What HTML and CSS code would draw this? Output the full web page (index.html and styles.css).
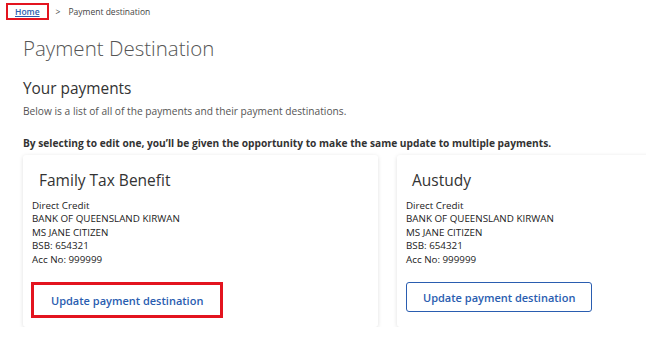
FILE: index.html
```html
<!DOCTYPE html>
<html lang="en">

<head>
	<meta charset="UTF-8" />
	<meta name="viewport" content="width=device-width, initial-scale=1.0" />
	<title>Payment Destination</title>
	<link rel="stylesheet" href="styles.css">
</head>

<body>
	<nav class="breadcrumb">
		<a href="#" class="crumb-home">Home</a>
		<span class="crumb-sep">&gt;</span>
		<span class="crumb-current">Payment destination</span>
	</nav>

	<main class="page">
		<h1 class="page-title">Payment Destination</h1>
		<h2 class="section-title">Your payments</h2>
		<p class="intro">Below is a list of all of the payments and their payment destinations.</p>
		<p class="note">By selecting to edit one, you’ll be given the opportunity to make the same update to multiple payments.</p>

		<div class="cards">
			<div class="card card-first">
				<h3 class="card-title">Family Tax Benefit</h3>
				<div class="card-details">
					<div>Direct Credit</div>
					<div>BANK OF QUEENSLAND KIRWAN</div>
					<div>MS JANE CITIZEN</div>
					<div>BSB: 654321</div>
					<div>Acc No: 999999</div>
				</div>
				<button class="update-button highlighted">Update payment destination</button>
			</div>
			<div class="card card-second">
				<h3 class="card-title">Austudy</h3>
				<div class="card-details">
					<div>Direct Credit</div>
					<div>BANK OF QUEENSLAND KIRWAN</div>
					<div>MS JANE CITIZEN</div>
					<div>BSB: 654321</div>
					<div>Acc No: 999999</div>
				</div>
				<button class="update-button">Update payment destination</button>
			</div>
		</div>
	</main>
</body>

</html>
```

FILE: styles.css
```css
body {
	margin: 0;
	background-color: #ffffff;
	font-family: "Open Sans", "Noto Sans", sans-serif;
	color: #333333;
	overflow: hidden;
}

.breadcrumb {
	display: flex;
	align-items: center;
	gap: 7px;
	padding: 3px 0 0 6px;
	font-size: 8.5px;
	color: #444444;
}

.crumb-home {
	color: #2a5db0;
	font-weight: 600;
	padding: 1px 7px;
	border: 2px solid #e3141f;
}

.crumb-sep {
	margin-right: 1px;
}

.page {
	padding: 0 0 0 23px;
}

.page-title {
	margin: 14px 0 0;
	font-size: 20.5px;
	font-weight: 300;
	color: #555555;
}

.section-title {
	margin: 16px 0 0;
	font-size: 15.4px;
	font-weight: 400;
	color: #333333;
}

.intro {
	margin: 5px 0 0;
	font-size: 10.2px;
	color: #555555;
}

.note {
	margin: 18px 0 0;
	font-size: 10.2px;
	font-weight: 700;
	color: #333333;
}

.cards {
	display: flex;
	gap: 19px;
	margin-top: 5px;
}

.card {
	background-color: #ffffff;
	border-radius: 3px;
	box-shadow: 0 1px 4px rgba(0, 0, 0, 0.13);
	height: 172px;
	box-sizing: border-box;
	padding: 10px 9px;
}

.card-first {
	width: 355px;
	flex-shrink: 0;
}

.card-second {
	flex: 1;
	margin-right: -10px;
}

.card-title {
	margin: 4px 0 0 7px;
	font-size: 15.5px;
	font-weight: 400;
	color: #333333;
}

.card-second .card-title {
	margin-left: 6px;
}

.card-details {
	margin-top: 8px;
	font-size: 9.8px;
	line-height: 13.4px;
	color: #222222;
}

.update-button {
	margin-top: 16px;
	padding: 0 16px;
	height: 30px;
	background-color: #ffffff;
	border: 1px solid #2a5db0;
	border-radius: 3px;
	color: #2a5db0;
	font-family: "Open Sans", "Noto Sans", sans-serif;
	font-size: 11px;
	font-weight: 600;
	cursor: pointer;
}

.update-button.highlighted {
	height: 36px;
	padding: 0 17px;
	border: 3px solid #e3141f;
	border-radius: 0;
	margin-left: -1px;
}
```
